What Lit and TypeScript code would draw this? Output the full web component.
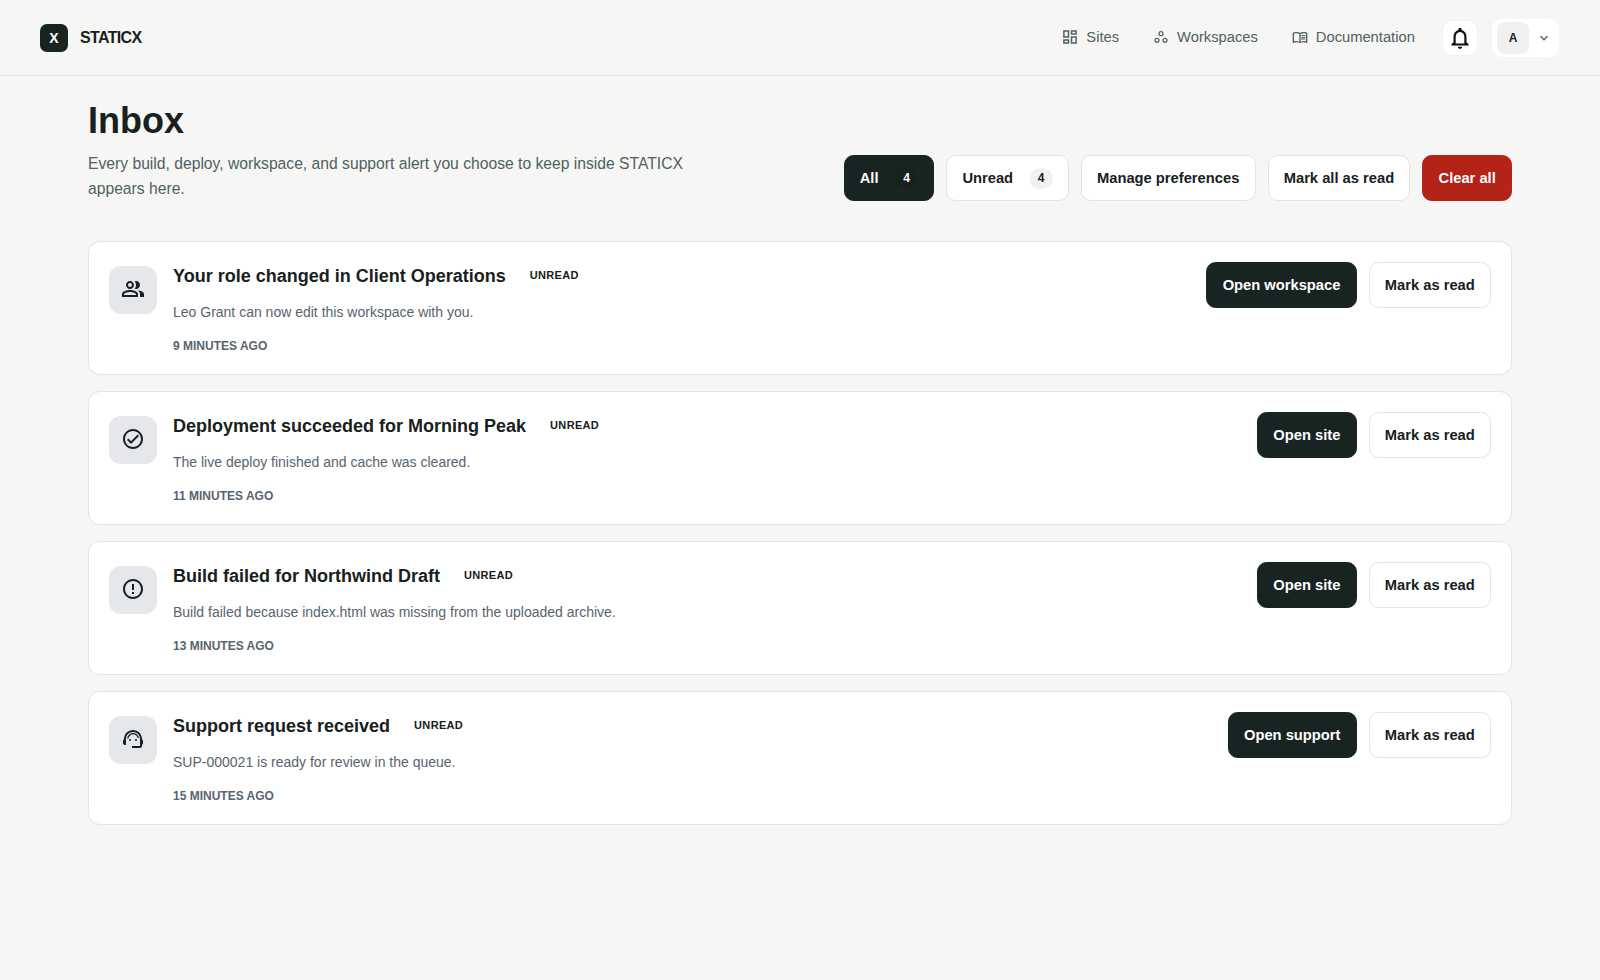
import { LitElement, html, css, svg } from 'lit';
import { customElement } from 'lit/decorators.js';

const icons = {
  sites: svg`<path d="M19 5v2h-4V5h4M9 5v6H5V5h4m10 8v6h-4v-6h4M9 17v2H5v-2h4M21 3h-8v6h8V3zM11 3H3v10h8V3zm10 8h-8v10h8V11zm-10 4H3v6h8v-6z"/>`,
  workspaces: svg`<path d="M6 15c1.1 0 2 .9 2 2s-.9 2-2 2-2-.9-2-2 .9-2 2-2m0-2c-2.2 0-4 1.8-4 4s1.8 4 4 4 4-1.8 4-4-1.8-4-4-4zm6-8c1.1 0 2 .9 2 2s-.9 2-2 2-2-.9-2-2 .9-2 2-2m0-2C9.8 3 8 4.8 8 7s1.8 4 4 4 4-1.8 4-4-1.8-4-4-4zm6 12c1.1 0 2 .9 2 2s-.9 2-2 2-2-.9-2-2 .9-2 2-2m0-2c-2.2 0-4 1.8-4 4s1.8 4 4 4 4-1.8 4-4-1.8-4-4-4z"/>`,
  docs: svg`<path d="M21 5c-1.11-.35-2.33-.5-3.5-.5-1.95 0-4.05.4-5.5 1.5-1.45-1.1-3.55-1.5-5.5-1.5S2.45 4.9 1 6v14.65c0 .25.25.5.5.5.1 0 .15-.05.25-.05C3.1 20.45 5.05 20 6.5 20c1.95 0 4.05.4 5.5 1.5 1.35-.85 3.8-1.5 5.5-1.5 1.65 0 3.35.3 4.75 1.05.1.05.15.05.25.05.25 0 .5-.25.5-.5V6c-.6-.45-1.25-.75-2-1zM3 18.5V7c1.1-.35 2.3-.5 3.5-.5 1.34 0 3.13.41 4.5.99v11.5C9.63 18.41 7.84 18 6.5 18c-1.2 0-2.4.15-3.5.5zm18 0c-1.1-.35-2.3-.5-3.5-.5-1.34 0-3.13.41-4.5.99V7.49c1.37-.59 3.16-.99 4.5-.99 1.2 0 2.4.15 3.5.5v11.5z"/><path d="M17.5 10.5c.88 0 1.73.09 2.5.26V9.24c-.79-.15-1.64-.24-2.5-.24-1.28 0-2.46.16-3.5.47v1.57c.99-.53 2.37-.54 3.5-.54zM14 12.49v1.57c.99-.53 2.37-.54 3.5-.54.88 0 1.73.09 2.5.26V12.2c-.79-.15-1.64-.24-2.5-.24-1.28 0-2.46.17-3.5.53zM17.5 14.33c-1.28 0-2.46.16-3.5.47v1.57c.99-.53 2.37-.54 3.5-.54.88 0 1.73.09 2.5.26v-1.52c-.79-.16-1.64-.24-2.5-.24z"/>`,
  bell: svg`<path d="M12 22c1.1 0 2-.9 2-2h-4c0 1.1.9 2 2 2zm6-6v-5c0-3.07-1.63-5.64-4.5-6.32V4c0-.83-.67-1.5-1.5-1.5s-1.5.67-1.5 1.5v.68C7.64 5.36 6 7.92 6 11v5l-2 2v1h16v-1l-2-2zm-2 1H8v-6c0-2.48 1.51-4.5 4-4.5s4 2.02 4 4.5v6z"/>`,
  chevron: svg`<path d="M16.59 8.59L12 13.17 7.41 8.59 6 10l6 6 6-6z"/>`,
  people: svg`<path d="M16.67 13.13C18.04 14.06 19 15.32 19 17v3h4v-3c0-2.18-3.57-3.47-6.33-3.87z"/><path d="M15 12c2.21 0 4-1.79 4-4s-1.79-4-4-4c-.47 0-.91.1-1.33.24C14.5 5.27 15 6.58 15 8s-.5 2.73-1.33 3.76c.42.14.86.24 1.33.24z"/><path d="M9 12c2.21 0 4-1.79 4-4s-1.79-4-4-4-4 1.79-4 4 1.79 4 4 4zm0-6c1.1 0 2 .9 2 2s-.9 2-2 2-2-.9-2-2 .9-2 2-2z"/><path d="M9 13c-2.67 0-8 1.34-8 4v3h16v-3c0-2.66-5.33-4-8-4zm6 5H3v-.99C3.2 16.29 6.3 15 9 15s5.8 1.29 6 2v1z"/>`,
  check: svg`<path d="M12 2C6.48 2 2 6.48 2 12s4.48 10 10 10 10-4.48 10-10S17.52 2 12 2zm0 18c-4.41 0-8-3.59-8-8s3.59-8 8-8 8 3.59 8 8-3.59 8-8 8zm4.59-12.42L10 14.17l-2.59-2.58L6 13l4 4 8-8z"/>`,
  alert: svg`<path d="M11 15h2v2h-2zm0-8h2v6h-2zm.99-5C6.47 2 2 6.48 2 12s4.47 10 9.99 10C17.52 22 22 17.52 22 12S17.52 2 11.99 2zM12 20c-4.42 0-8-3.58-8-8s3.58-8 8-8 8 3.58 8 8-3.58 8-8 8z"/>`,
  support: svg`<path d="M21 12.22C21 6.73 16.74 3 12 3c-4.69 0-9 3.65-9 9.28-.6.34-1 .98-1 1.72v2c0 1.1.9 2 2 2h1v-6.1c0-3.87 3.13-7 7-7s7 3.13 7 7V19h-8v2h8c1.1 0 2-.9 2-2v-1.22c.59-.31 1-.92 1-1.59v-2.3c0-.7-.41-1.31-1-1.62z"/><circle cx="9" cy="13" r="1"/><circle cx="15" cy="13" r="1"/><path d="M6.1 11.6C6.6 8.4 9 6 12 6s5.4 2.3 6 5h-1.3c-.6-2-2.4-3.7-4.7-3.7S7.9 9 7.4 11.6z"/>`,
};

type IconName = keyof typeof icons;

const inbox: { icon: IconName; title: string; text: string; time: string; action: string }[] = [
  { icon: 'people', title: 'Your role changed in Client Operations', text: 'Leo Grant can now edit this workspace with you.', time: '9 minutes ago', action: 'Open workspace' },
  { icon: 'check', title: 'Deployment succeeded for Morning Peak', text: 'The live deploy finished and cache was cleared.', time: '11 minutes ago', action: 'Open site' },
  { icon: 'alert', title: 'Build failed for Northwind Draft', text: 'Build failed because index.html was missing from the uploaded archive.', time: '13 minutes ago', action: 'Open site' },
  { icon: 'support', title: 'Support request received', text: 'SUP-000021 is ready for review in the queue.', time: '15 minutes ago', action: 'Open support' },
];

@customElement('app-root')
export class AppRoot extends LitElement {
  static styles = css`
    :host {
      display: block;
      min-height: 980px;
      background: #f6f6f4;
      color: #172120;
      font-family: 'Liberation Sans', Arial, sans-serif;
    }

    * {
      box-sizing: border-box;
    }

    svg {
      display: block;
      fill: currentColor;
      flex: none;
    }

    header {
      height: 76px;
      padding: 0 41px 0 40px;
      border-bottom: 1px solid #dfdfdd;
      display: flex;
      align-items: center;
      justify-content: space-between;
    }

    .brand {
      display: flex;
      align-items: center;
      gap: 12px;
      font-size: 16px;
      font-weight: 700;
      letter-spacing: -0.65px;
    }

    .logo {
      width: 28px;
      height: 28px;
      border-radius: 7px;
      background: #182422;
      color: #fff;
      display: grid;
      place-items: center;
      font-size: 14px;
      letter-spacing: 0;
    }

    .top-right {
      display: flex;
      align-items: center;
    }

    nav {
      display: flex;
      align-items: center;
      gap: 34px;
      margin-right: 27.2px;
      margin-bottom: 2px;
    }

    nav a {
      display: flex;
      align-items: center;
      gap: 8px;
      font-size: 14.72px;
      color: #4f6160;
    }

    .bell {
      width: 36px;
      height: 36px;
      border-radius: 10px;
      background: #fff;
      border: 1px solid #f3f3f1;
      color: #0c1212;
      display: grid;
      place-items: center;
      margin-right: 14px;
    }

    .account {
      width: 67px;
      height: 38px;
      border-radius: 10px;
      background: #fff;
      padding: 3px 5px;
      display: flex;
      align-items: center;
      gap: 7px;
      color: #4f6160;
    }

    .avatar {
      width: 32px;
      height: 32px;
      border-radius: 8px;
      background: #f0f1ef;
      color: #172120;
      display: grid;
      place-items: center;
      font-size: 12px;
      font-weight: 700;
    }

    main {
      padding: 25px 88px 0;
    }

    h1 {
      margin: 0 0 10px;
      font-size: 36px;
      line-height: 40px;
      font-weight: 700;
    }

    .head {
      display: flex;
      align-items: flex-end;
      justify-content: space-between;
      margin-bottom: 40px;
    }

    .lead {
      margin: 0;
      width: 620px;
      font-size: 15.68px;
      line-height: 25px;
      color: #4f6160;
    }

    .toolbar {
      display: flex;
      gap: 12px;
    }

    .btn {
      height: 46px;
      padding: 0 15.2px;
      border: 1px solid #e4e4e2;
      border-radius: 9.6px;
      background: #fff;
      color: #172120;
      display: flex;
      align-items: center;
      gap: 16.5px;
      font-size: 14.72px;
      font-weight: 700;
      white-space: nowrap;
    }

    .btn.dark {
      background: #182422;
      border-color: #182422;
      color: #fff;
    }

    .btn.red {
      background: #b32317;
      border-color: #b32317;
      color: #fff;
    }

    .count {
      width: 23px;
      height: 21px;
      border-radius: 11px;
      background: #f1f1ef;
      display: grid;
      place-items: center;
      font-size: 12px;
    }

    .dark .count {
      background: #172220;
    }

    .list {
      display: flex;
      flex-direction: column;
      gap: 16px;
    }

    .card {
      height: 134px;
      padding: 20px;
      border: 1px solid #e4e4e2;
      border-radius: 12px;
      background: #fff;
      display: flex;
      justify-content: space-between;
    }

    .info {
      display: flex;
      gap: 16px;
    }

    .icon {
      width: 48px;
      height: 48px;
      margin-top: 4px;
      padding-bottom: 2px;
      border-radius: 12px;
      background: #e5e7eb;
      display: grid;
      place-items: center;
    }

    .title-row {
      display: flex;
      align-items: center;
      gap: 24px;
      height: 28px;
    }

    h2 {
      margin: 0;
      font-size: 18px;
      line-height: 28px;
      font-weight: 700;
    }

    .tag {
      margin-bottom: 2px;
      font-size: 11px;
      font-weight: 700;
      letter-spacing: 0.33px;
      color: #172120;
    }

    .text {
      margin: 12px 0 0;
      font-size: 14px;
      line-height: 20px;
      color: #586470;
    }

    .time {
      margin-top: 16px;
      font-size: 12px;
      line-height: 16px;
      font-weight: 700;
      text-transform: uppercase;
      color: #586470;
    }

    .actions {
      display: flex;
      gap: 12px;
    }
  `;

  private _icon(name: IconName, size: number, box = '0 0 24 24') {
    return html`<svg width=${size} height=${size} viewBox=${box}>${icons[name]}</svg>`;
  }

  render() {
    return html`
      <header>
        <div class="brand"><span class="logo">X</span>STATICX</div>
        <div class="top-right">
          <nav>
            <a>${this._icon('sites', 16, '1.5 1.5 21 21')}Sites</a>
            <a>${this._icon('workspaces', 16)}Workspaces</a>
            <a>${this._icon('docs', 16)}Documentation</a>
          </nav>
          <div class="bell">${this._icon('bell', 26)}</div>
          <div class="account">
            <span class="avatar">A</span>
            ${this._icon('chevron', 16)}
          </div>
        </div>
      </header>
      <main>
        <h1>Inbox</h1>
        <div class="head">
          <p class="lead">Every build, deploy, workspace, and support alert you choose to keep inside STATICX appears here.</p>
          <div class="toolbar">
            <div class="btn dark">All <span class="count">4</span></div>
            <div class="btn">Unread <span class="count">4</span></div>
            <div class="btn">Manage preferences</div>
            <div class="btn">Mark all as read</div>
            <div class="btn red">Clear all</div>
          </div>
        </div>
        <div class="list">
          ${inbox.map(
            (item) => html`
              <section class="card">
                <div class="info">
                  <div class="icon">${this._icon(item.icon, 24)}</div>
                  <div>
                    <div class="title-row">
                      <h2>${item.title}</h2>
                      <span class="tag">UNREAD</span>
                    </div>
                    <p class="text">${item.text}</p>
                    <div class="time">${item.time}</div>
                  </div>
                </div>
                <div class="actions">
                  <div class="btn dark">${item.action}</div>
                  <div class="btn">Mark as read</div>
                </div>
              </section>
            `
          )}
        </div>
      </main>
    `;
  }
}

declare global {
  interface HTMLElementTagNameMap {
    'app-root': AppRoot;
  }
}
